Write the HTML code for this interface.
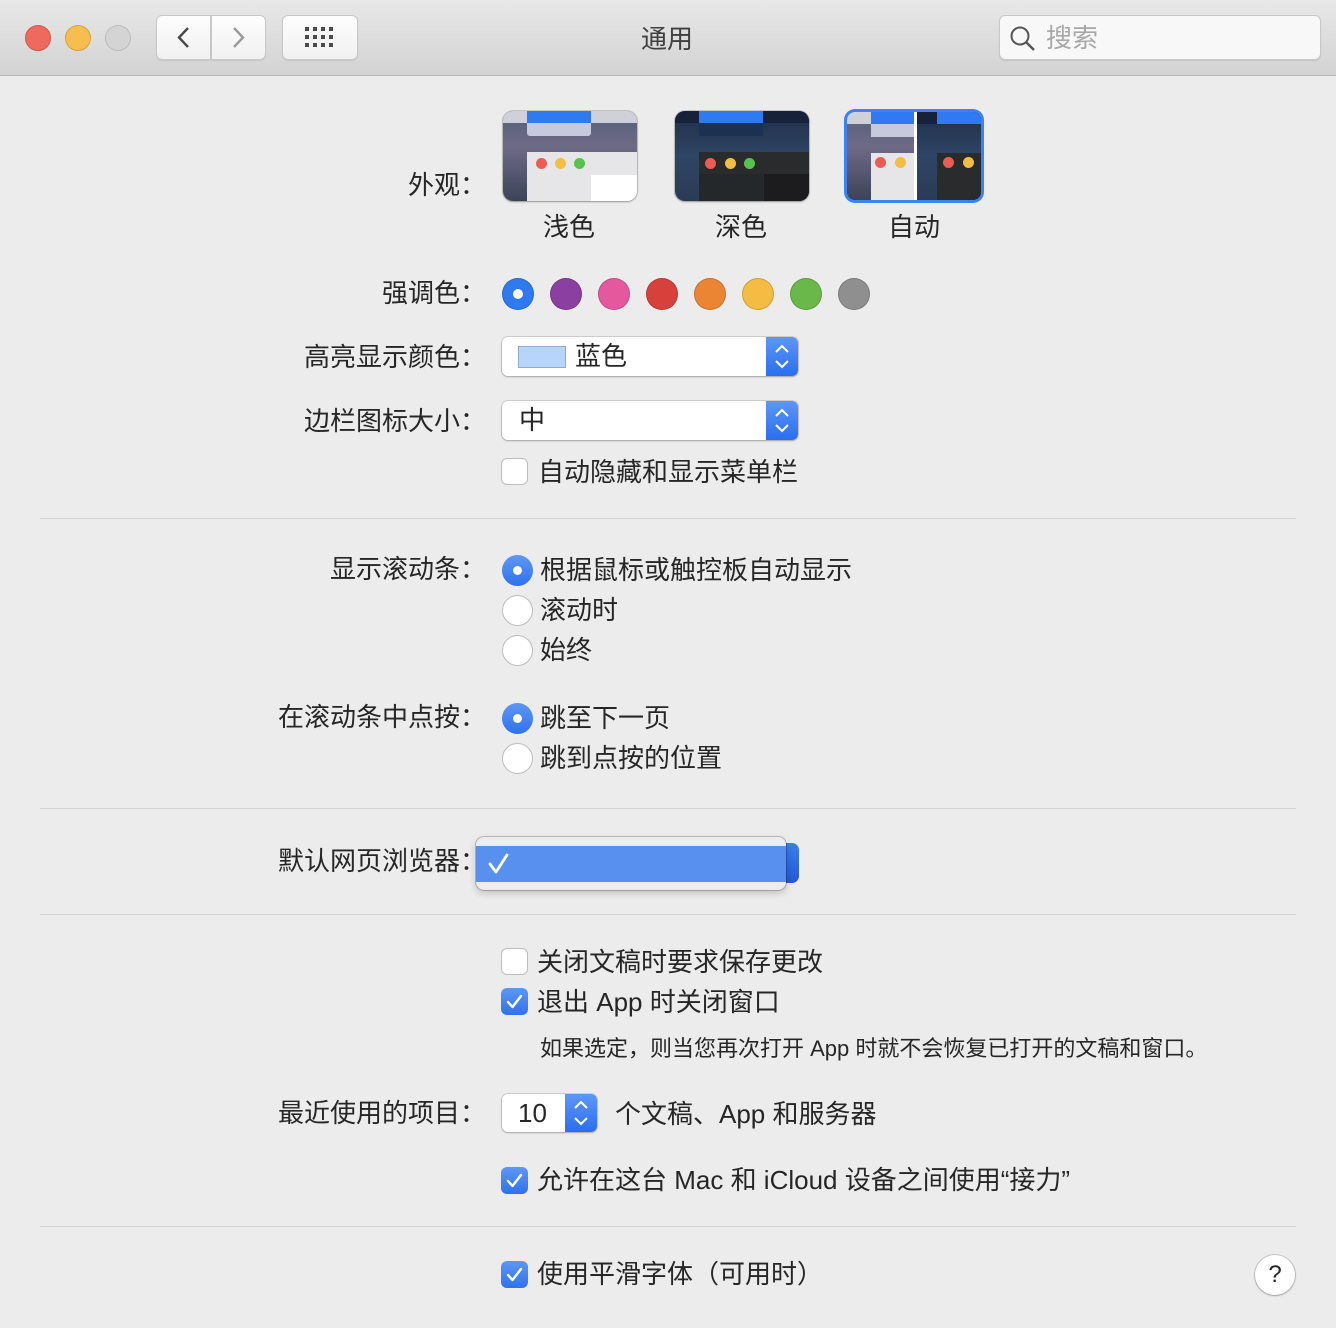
<!DOCTYPE html>
<html><head><meta charset="utf-8">
<style>
*{margin:0;padding:0;box-sizing:border-box}
body{width:1336px;height:1328px;background:#ececec;font-family:"Liberation Sans","Noto Sans CJK SC",sans-serif;color:#262626;position:relative;overflow:hidden}
.abs{position:absolute}
.tb{left:0;top:0;width:1336px;height:76px;background:linear-gradient(#e8e8e8,#d3d3d3);border-bottom:1px solid #b5b5b5}
.light{width:26px;height:26px;border-radius:50%;top:25px}
.btn{background:linear-gradient(#fdfdfd,#f1f1f1);border:1px solid #c8c8c8;border-radius:6px;box-shadow:0 1px 1px rgba(0,0,0,.08)}
.lbl{right:850px;font-size:26px;white-space:nowrap;text-align:right;line-height:34px}
.t{font-size:26px;white-space:nowrap;line-height:34px}
.sep{left:40px;width:1256px;height:1px;background:#d3d3d3}
.dot{width:32px;height:32px;border-radius:50%;top:278px;border:1px solid rgba(0,0,0,.15)}
.pop{background:#fff;border-radius:6px;box-shadow:0 0 0 1px rgba(0,0,0,.12),0 1px 2px rgba(0,0,0,.2)}
.step{position:absolute;right:0;top:0;bottom:0;width:32px;background:linear-gradient(#5e97f6,#2a6ef0);border-radius:0 6px 6px 0}
.cb{width:27px;height:27px;border-radius:6px;background:#fff;border:1px solid #bdbdbd}
.cbon{width:27px;height:27px;border-radius:6px;background:linear-gradient(#5e97f6,#2e72ef)}
.rad{width:31px;height:31px;border-radius:50%;background:#fff;border:1px solid #bdbdbd}
.radon{width:31px;height:31px;border-radius:50%;background:linear-gradient(#5e97f6,#2e72ef)}
.radon::after{content:"";position:absolute;left:11px;top:11px;width:9px;height:9px;border-radius:50%;background:#fff}
.thumb{width:134px;height:90px;border-radius:10px;overflow:hidden;top:111px;box-shadow:0 0 0 1px rgba(0,0,0,.15),0 1px 2px rgba(0,0,0,.25)}
</style></head><body>
<div class="abs tb"></div>
<div class="abs light" style="left:25px;background:#ee6a5e;border:1px solid #d9534a"></div>
<div class="abs light" style="left:65px;background:#f5be4f;border:1px solid #daa13b"></div>
<div class="abs light" style="left:105px;background:#d4d4d4;border:1px solid #bcbcbc"></div>
<div class="abs btn" style="left:156px;top:15px;width:55px;height:45px;border-radius:6px 0 0 6px"></div>
<div class="abs btn" style="left:211px;top:15px;width:55px;height:45px;border-radius:0 6px 6px 0"></div>
<svg class="abs" style="left:156px;top:15px" width="110" height="45"><path d="M32 13 L23 22.5 L32 32" stroke="#4a4a4a" stroke-width="2.4" fill="none"/><path d="M78 13 L87 22.5 L78 32" stroke="#9a9a9a" stroke-width="2.4" fill="none"/></svg>
<div class="abs btn" style="left:282px;top:15px;width:76px;height:45px"></div>
<svg class="abs" style="left:305px;top:27px" width="30" height="22"><g fill="#4a4a4a">
<rect x="0" y="0" width="4" height="4"/><rect x="8" y="0" width="4" height="4"/><rect x="16" y="0" width="4" height="4"/><rect x="24" y="0" width="4" height="4"/>
<rect x="0" y="8" width="4" height="4"/><rect x="8" y="8" width="4" height="4"/><rect x="16" y="8" width="4" height="4"/><rect x="24" y="8" width="4" height="4"/>
<rect x="0" y="16" width="4" height="4"/><rect x="8" y="16" width="4" height="4"/><rect x="16" y="16" width="4" height="4"/><rect x="24" y="16" width="4" height="4"/></g></svg>
<div class="abs t" style="left:641px;top:22px;color:#404040">通用</div>
<div class="abs btn" style="left:999px;top:15px;width:322px;height:45px;background:#f8f8f8"></div>
<svg class="abs" style="left:1009px;top:25px" width="28" height="28"><circle cx="11" cy="11" r="8.5" stroke="#555" stroke-width="2" fill="none"/><path d="M17 17 L25 25" stroke="#555" stroke-width="2.4"/></svg>
<div class="abs t" style="left:1046px;top:21px;color:#a8a8a8">搜索</div>

<div class="abs lbl" style="top:168px">外观：</div>
<div class="abs thumb" style="left:503px;background:linear-gradient(#55607a,#6e6a86 40%,#3c4358)">
 <div class="abs" style="left:0;top:0;width:134px;height:12px;background:#cfd0d8"></div>
 <div class="abs" style="left:24px;top:0;width:64px;height:12px;background:#2f7af0"></div>
 <div class="abs" style="left:24px;top:12px;width:64px;height:13px;background:#c7c9dc;border-radius:0 0 3px 3px"></div>
 <div class="abs" style="left:24px;top:41px;width:110px;height:49px;background:#e6e6e8"></div>
 <div class="abs" style="left:88px;top:64px;width:46px;height:26px;background:#fff"></div>
 <div class="abs" style="left:33px;top:47px;width:11px;height:11px;border-radius:50%;background:#ec5c52"></div>
 <div class="abs" style="left:52px;top:47px;width:11px;height:11px;border-radius:50%;background:#f3be42"></div>
 <div class="abs" style="left:71px;top:47px;width:11px;height:11px;border-radius:50%;background:#58c34c"></div>
</div>
<div class="abs thumb" style="left:675px;background:linear-gradient(#1f2e47,#2f4565 50%,#2a3b55)">
 <div class="abs" style="left:0;top:0;width:134px;height:12px;background:#16223a"></div>
 <div class="abs" style="left:24px;top:0;width:64px;height:12px;background:#2f7af0"></div>
 <div class="abs" style="left:24px;top:12px;width:64px;height:13px;background:#1c3152"></div>
 <div class="abs" style="left:24px;top:41px;width:110px;height:49px;background:#2a2b2d"></div>
 <div class="abs" style="left:24px;top:63px;width:64px;height:27px;background:#25282b"></div>
 <div class="abs" style="left:89px;top:63px;width:45px;height:27px;background:#1c1c1e"></div>
 <div class="abs" style="left:30px;top:47px;width:11px;height:11px;border-radius:50%;background:#ec5c52"></div>
 <div class="abs" style="left:50px;top:47px;width:11px;height:11px;border-radius:50%;background:#f3be42"></div>
 <div class="abs" style="left:69px;top:47px;width:11px;height:11px;border-radius:50%;background:#58c34c"></div>
</div>
<div class="abs" style="left:844px;top:109px;width:140px;height:94px;border-radius:11px;background:#3a82f6"></div>
<div class="abs thumb" style="left:847px;top:112px;width:134px;height:88px;border-radius:8px;box-shadow:none;background:linear-gradient(#55607a,#6e6a86 40%,#3c4358)">
 <div class="abs" style="left:0;top:0;width:67px;height:12px;background:#cfd0d8"></div>
 <div class="abs" style="left:24px;top:0;width:43px;height:12px;background:#2f7af0"></div>
 <div class="abs" style="left:24px;top:12px;width:43px;height:13px;background:#c7c9dc"></div>
 <div class="abs" style="left:24px;top:41px;width:43px;height:47px;background:#e6e6e8"></div>
 <div class="abs" style="left:28px;top:45px;width:11px;height:11px;border-radius:50%;background:#ec5c52"></div>
 <div class="abs" style="left:48px;top:45px;width:11px;height:11px;border-radius:50%;background:#f3be42"></div>
 <div class="abs" style="left:67px;top:0;width:3px;height:88px;background:#fff"></div>
 <div class="abs" style="left:70px;top:0;width:64px;height:88px;background:linear-gradient(#1f2e47,#2f4565 50%,#2a3b55)"></div>
 <div class="abs" style="left:70px;top:0;width:20px;height:12px;background:#16223a"></div>
 <div class="abs" style="left:90px;top:0;width:44px;height:12px;background:#2f7af0"></div>
 <div class="abs" style="left:90px;top:41px;width:44px;height:47px;background:#2a2b2d"></div>
 <div class="abs" style="left:96px;top:45px;width:11px;height:11px;border-radius:50%;background:#ec5c52"></div>
 <div class="abs" style="left:116px;top:45px;width:11px;height:11px;border-radius:50%;background:#f3be42"></div>
</div>
<div class="abs t" style="left:543px;top:210px">浅色</div>
<div class="abs t" style="left:715px;top:210px">深色</div>
<div class="abs t" style="left:888px;top:210px">自动</div>

<div class="abs lbl" style="top:276px">强调色：</div>
<div class="abs dot" style="left:502px;background:#2f7af0"><div class="abs" style="left:10px;top:10px;width:10px;height:10px;border-radius:50%;background:#fff"></div></div>
<div class="abs dot" style="left:550px;background:#8b3fa0"></div>
<div class="abs dot" style="left:598px;background:#e5589e"></div>
<div class="abs dot" style="left:646px;background:#d8403c"></div>
<div class="abs dot" style="left:694px;background:#eb8534"></div>
<div class="abs dot" style="left:742px;background:#f4bc42"></div>
<div class="abs dot" style="left:790px;background:#6ab74a"></div>
<div class="abs dot" style="left:838px;background:#8f8f8f"></div>

<div class="abs lbl" style="top:340px">高亮显示颜色：</div>
<div class="abs pop" style="left:502px;top:337px;width:296px;height:39px"><div class="step"></div>
 <div class="abs" style="left:16px;top:9px;width:48px;height:22px;background:#b7d5fb;border:1px solid #8eaad0"></div>
 <div class="abs t" style="left:73px;top:2px">蓝色</div></div>
<svg class="abs" style="left:766px;top:337px" width="32" height="39"><path d="M10 15 L16 9 L22 15 M10 24 L16 30 L22 24" stroke="#fff" stroke-width="2" fill="none"/></svg>

<div class="abs lbl" style="top:404px">边栏图标大小：</div>
<div class="abs pop" style="left:502px;top:401px;width:296px;height:39px"><div class="step"></div>
 <div class="abs t" style="left:17px;top:2px">中</div></div>
<svg class="abs" style="left:766px;top:401px" width="32" height="39"><path d="M10 15 L16 9 L22 15 M10 24 L16 30 L22 24" stroke="#fff" stroke-width="2" fill="none"/></svg>

<div class="abs cb" style="left:501px;top:458px"></div>
<div class="abs t" style="left:538px;top:455px">自动隐藏和显示菜单栏</div>

<div class="abs sep" style="top:518px"></div>

<div class="abs lbl" style="top:552px">显示滚动条：</div>
<div class="abs radon" style="left:502px;top:555px"></div>
<div class="abs t" style="left:540px;top:553px">根据鼠标或触控板自动显示</div>
<div class="abs rad" style="left:502px;top:595px"></div>
<div class="abs t" style="left:540px;top:593px">滚动时</div>
<div class="abs rad" style="left:502px;top:635px"></div>
<div class="abs t" style="left:540px;top:633px">始终</div>

<div class="abs lbl" style="top:700px">在滚动条中点按：</div>
<div class="abs radon" style="left:502px;top:703px"></div>
<div class="abs t" style="left:540px;top:701px">跳至下一页</div>
<div class="abs rad" style="left:502px;top:743px"></div>
<div class="abs t" style="left:540px;top:741px">跳到点按的位置</div>

<div class="abs sep" style="top:808px"></div>

<div class="abs lbl" style="top:844px">默认网页浏览器：</div>
<div class="abs" style="left:770px;top:843px;width:29px;height:40px;border-radius:0 7px 7px 0;background:linear-gradient(#3b7ff0,#2358d4)"></div>
<div class="abs" style="left:476px;top:837px;width:310px;height:53px;border-radius:8px;background:#ececec;box-shadow:0 0 0 1px rgba(0,0,0,.2),0 3px 8px rgba(0,0,0,.2)"></div>
<div class="abs" style="left:476px;top:846px;width:310px;height:36px;background:#5790ee"></div>
<svg class="abs" style="left:486px;top:850px" width="26" height="28"><path d="M4 14 L10 22 L21 5" stroke="#fff" stroke-width="2.8" fill="none" stroke-linecap="round" stroke-linejoin="round"/></svg>

<div class="abs sep" style="top:914px"></div>

<div class="abs cb" style="left:501px;top:948px"></div>
<div class="abs t" style="left:537px;top:945px">关闭文稿时要求保存更改</div>
<div class="abs cbon" style="left:501px;top:988px"></div>
<svg class="abs" style="left:501px;top:988px" width="27" height="27"><path d="M7 14 L11.5 19 L20 8" stroke="#fff" stroke-width="2.4" fill="none" stroke-linecap="round" stroke-linejoin="round"/></svg>
<div class="abs t" style="left:537px;top:985px">退出 App 时关闭窗口</div>
<div class="abs" style="left:540px;top:1031px;font-size:22px;white-space:nowrap">如果选定，则当您再次打开 App 时就不会恢复已打开的文稿和窗口。</div>

<div class="abs lbl" style="top:1096px">最近使用的项目：</div>
<div class="abs pop" style="left:502px;top:1094px;width:95px;height:38px"><div class="step" style="width:32px"></div>
 <div class="abs t" style="left:16px;top:2px">10</div></div>
<svg class="abs" style="left:565px;top:1094px" width="32" height="38"><path d="M10 14 L16 8 L22 14 M10 24 L16 30 L22 24" stroke="#fff" stroke-width="2" fill="none"/></svg>
<div class="abs t" style="left:615px;top:1097px">个文稿、App 和服务器</div>

<div class="abs cbon" style="left:501px;top:1167px"></div>
<svg class="abs" style="left:501px;top:1167px" width="27" height="27"><path d="M7 14 L11.5 19 L20 8" stroke="#fff" stroke-width="2.4" fill="none" stroke-linecap="round" stroke-linejoin="round"/></svg>
<div class="abs t" style="left:537px;top:1163px">允许在这台 Mac 和 iCloud 设备之间使用“接力”</div>

<div class="abs sep" style="top:1226px"></div>

<div class="abs cbon" style="left:501px;top:1261px"></div>
<svg class="abs" style="left:501px;top:1261px" width="27" height="27"><path d="M7 14 L11.5 19 L20 8" stroke="#fff" stroke-width="2.4" fill="none" stroke-linecap="round" stroke-linejoin="round"/></svg>
<div class="abs t" style="left:537px;top:1257px">使用平滑字体（可用时）</div>
<div class="abs" style="left:1255px;top:1255px;width:40px;height:40px;border-radius:50%;background:#fff;box-shadow:0 0 0 1px rgba(0,0,0,.15),0 1px 2px rgba(0,0,0,.2);text-align:center;line-height:40px;font-size:24px">?</div>
</body></html>
